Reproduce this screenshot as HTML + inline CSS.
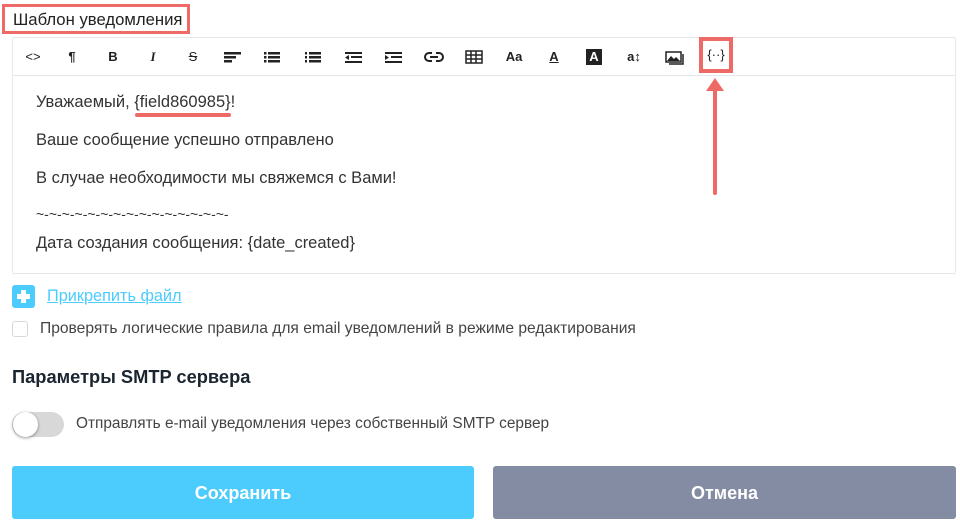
<!DOCTYPE html>
<html><head><meta charset="utf-8"><style>
*{margin:0;padding:0;box-sizing:border-box}
body{width:960px;height:523px;background:#fff;position:relative;overflow:hidden;font-family:"Liberation Sans","DejaVu Sans",sans-serif;color:#333}
.a{position:absolute}
.title{left:2px;top:4px;width:188px;height:30px;border:3px solid #ee6a67;font-size:16.7px;color:#222;padding:3px 0 0 8px;background:#fff;z-index:3;white-space:nowrap}
.ed{left:12px;top:37px;width:944px;height:237px;border:1px solid #e6e8ec;border-radius:2px}
.tb{left:12px;top:37px;width:944px;height:39px;border-bottom:1px solid #e3e6ea}
.ic{position:absolute;top:47px;width:24px;height:20px;text-align:center;font-size:13px;font-weight:bold;color:#222;line-height:20px}
.t{position:absolute;left:36px;font-size:16.5px;color:#333;white-space:nowrap}
</style></head><body>
<div class="a title">Шаблон уведомления</div>
<div class="a ed"></div>
<div class="a tb"></div>
<div class="ic" style="left:21px;font-weight:normal">&lt;&gt;</div>
<div class="ic" style="left:60px">¶</div>
<div class="ic" style="left:101px">B</div>
<div class="ic" style="left:141px;font-family:'Liberation Serif',serif;font-style:italic">I</div>
<div class="ic" style="left:181px;text-decoration:line-through;font-weight:normal">S</div>
<svg class="a" style="left:223px;top:50px" width="20" height="14"><rect x="1" y="2" width="17" height="2.5" fill="#222"/><rect x="1" y="6" width="12" height="2.5" fill="#222"/><rect x="1" y="10" width="8" height="2.5" fill="#222"/></svg>
<svg class="a" style="left:263px;top:50px" width="20" height="14"><g fill="#222"><rect x="1" y="2" width="2.5" height="2.5"/><rect x="1" y="6" width="2.5" height="2.5"/><rect x="1" y="10" width="2.5" height="2.5"/><rect x="5" y="2" width="12" height="2.5"/><rect x="5" y="6" width="12" height="2.5"/><rect x="5" y="10" width="12" height="2.5"/></g></svg>
<svg class="a" style="left:304px;top:50px" width="20" height="14"><g fill="#222"><rect x="1" y="2" width="2" height="2.5"/><rect x="1" y="6" width="2" height="2.5"/><rect x="1" y="10" width="2" height="2.5"/><rect x="5" y="2" width="12" height="2.5"/><rect x="5" y="6" width="12" height="2.5"/><rect x="5" y="10" width="12" height="2.5"/></g></svg>
<svg class="a" style="left:344px;top:50px" width="20" height="14"><g fill="#222"><rect x="1" y="2" width="17" height="2"/><polygon points="1,7.5 5,5 5,10"/><rect x="7" y="6" width="11" height="2"/><rect x="1" y="11" width="17" height="2"/></g></svg>
<svg class="a" style="left:384px;top:50px" width="20" height="14"><g fill="#222"><rect x="1" y="2" width="17" height="2"/><polygon points="5,7.5 1,5 1,10"/><rect x="7" y="6" width="11" height="2"/><rect x="1" y="11" width="17" height="2"/></g></svg>
<svg class="a" style="left:424px;top:49px" width="20" height="16"><g fill="none" stroke="#222" stroke-width="2"><path d="M8 4H5a4 4 0 0 0 0 8h3"/><path d="M12 4h3a4 4 0 0 1 0 8h-3"/><path d="M6 8h8"/></g></svg>
<svg class="a" style="left:464px;top:49px" width="20" height="16"><g fill="none" stroke="#222" stroke-width="1.5"><rect x="2" y="2" width="16" height="12"/><path d="M2 6h16M2 10h16M7 2v12M12 2v12"/></g></svg>
<div class="ic" style="left:502px">Aa</div>
<div class="ic" style="left:542px;text-decoration:underline">A</div>
<div class="ic" style="left:586px;width:16px;height:16px;top:49px;line-height:16px;background:#222;color:#fff">A</div>
<div class="ic" style="left:622px">a↕</div>
<svg class="a" style="left:664px;top:48px" width="22" height="18"><g fill="none" stroke="#222" stroke-width="1.5"><rect x="2" y="4" width="15" height="10"/><path d="M19 6v10H5"/></g><path d="M3 13l4-5 3 3 2-2 4 4z" fill="#222"/></svg>
<div class="a" style="left:699px;top:37px;width:34px;height:36px;border:4px solid #ee6a67;font-size:13px;color:#222;text-align:center;line-height:28px">{··}</div>
<div class="a" style="left:713px;top:88px;width:4px;height:107px;background:#ee6a67;border-radius:2px"></div>
<svg class="a" style="left:706px;top:78px" width="18" height="14"><polygon points="9,0 18,13 0,13" fill="#ee6a67"/></svg>
<div class="t" style="top:93px">Уважаемый, {field860985}!</div>
<div class="a" style="left:135px;top:113px;width:96px;height:4px;background:#ee6a67;border-radius:2px"></div>
<div class="t" style="top:131px">Ваше сообщение успешно отправлено</div>
<div class="t" style="top:169px">В случае необходимости мы свяжемся с Вами!</div>
<div class="t" style="top:206px;font-size:14px">~-~-~-~-~-~-~-~-~-~-~-~-~-~-~-</div>
<div class="t" style="top:234px">Дата создания сообщения: {date_created}</div>
<div class="a" style="left:12px;top:285px;width:23px;height:23px;background:#4ccbfd;border-radius:3px"></div>
<div class="a" style="left:21px;top:290px;width:5px;height:13px;background:#fff"></div>
<div class="a" style="left:17px;top:294px;width:13px;height:5px;background:#fff"></div>
<div class="a" style="left:47px;top:287px;font-size:16.3px;color:#4ccbfd;text-decoration:underline">Прикрепить файл</div>
<div class="a" style="left:12px;top:321px;width:16px;height:16px;border:1px solid #d5d8dd;border-radius:3px"></div>
<div class="a" style="left:40px;top:320px;font-size:15.6px;color:#444;white-space:nowrap">Проверять логические правила для email уведомлений в режиме редактирования</div>
<div class="a" style="left:12px;top:366px;font-size:18.3px;font-weight:bold;color:#1a2530">Параметры SMTP сервера</div>
<div class="a" style="left:12px;top:412px;width:52px;height:25px;background:#d8d8d8;border-radius:13px"></div>
<div class="a" style="left:13px;top:412px;width:25px;height:25px;background:#fff;border-radius:50%;box-shadow:0 1px 3px rgba(0,0,0,.4)"></div>
<div class="a" style="left:76px;top:415px;font-size:15.4px;color:#444;white-space:nowrap">Отправлять e-mail уведомления через собственный SMTP сервер</div>
<div class="a" style="left:12px;top:466px;width:462px;height:53px;background:#4ccbfd;border-radius:3px;color:#fff;font-weight:bold;font-size:18px;text-align:center;line-height:55px">Сохранить</div>
<div class="a" style="left:493px;top:466px;width:463px;height:53px;background:#838ca2;border-radius:3px;color:#fff;font-weight:bold;font-size:18px;text-align:center;line-height:55px">Отмена</div>
</body></html>
